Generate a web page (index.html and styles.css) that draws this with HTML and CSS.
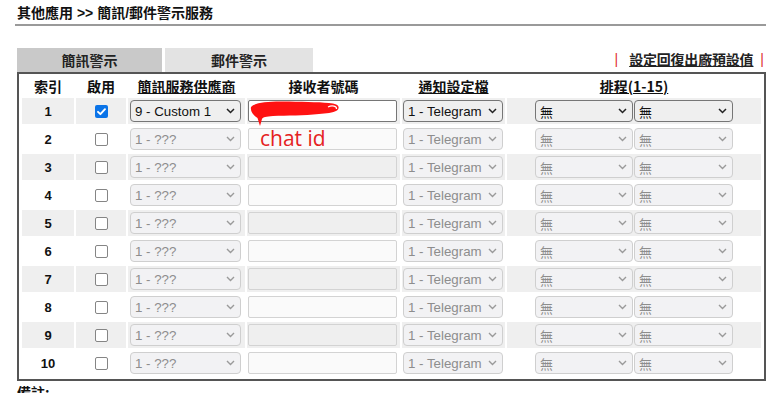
FILE: index.html
```html
<!DOCTYPE html>
<html lang="zh-Hant">
<head>
<meta charset="utf-8">
<title>簡訊/郵件警示服務</title>
<link rel="stylesheet" href="styles.css">
</head>
<body>
<div class="page">
  <div class="title">其他應用 &gt;&gt; 簡訊/郵件警示服務</div>
  <div class="rule"></div>
  <div class="tabbar">
    <div class="tab tab-on">簡訊警示</div>
    <div class="tab tab-off">郵件警示</div>
    <div class="reset"><span class="bar">|</span><a class="reset-link">設定回復出廠預設值</a><span class="bar">|</span></div>
  </div>
  <div class="box">
    <table class="grid">
      <colgroup>
        <col class="c-idx"><col class="c-en"><col class="c-prov"><col class="c-rcv"><col class="c-prof"><col class="c-sch">
      </colgroup>
      <thead>
        <tr>
          <th>索引</th>
          <th>啟用</th>
          <th><span class="ul">簡訊服務供應商</span></th>
          <th>接收者號碼</th>
          <th><span class="ul">通知設定檔</span></th>
          <th><span class="ul">排程(1-15)</span></th>
        </tr>
      </thead>
      <tbody>
        <tr class="alt">
          <td class="num">1</td>
          <td class="chk"><span class="cb on"><svg viewBox="0 0 13 13" width="13" height="13"><path d="M3 6.8 L5.4 9.2 L10 4.2" fill="none" stroke="#fff" stroke-width="1.9" stroke-linecap="round" stroke-linejoin="round"/></svg></span></td>
          <td class="prov"><div class="sel w-prov"><span>9 - Custom 1</span><svg class="chev" viewBox="0 0 9 6" width="9" height="6"><path d="M1 1 L4.5 4.5 L8 1" fill="none" stroke="#222" stroke-width="1.5"/></svg></div></td>
          <td class="rcv"><div class="inp"><svg class="scribble" viewBox="0 0 92 28" width="92" height="28"><path d="M2 7 C6 2 20 1 40 1.5 C58 2 74 2 84 3.5 C90 4.5 91 8 88 10.5 C84 13 77 13.5 70 14 C55 15.5 38 15.5 24 16 C17 16.5 14 17 13 19 L11 26 L8.5 18 C5 16 1 12 2 7 Z" fill="#ff1212"/><path d="M79 7 C83 5 88 6 87.5 9" fill="none" stroke="#fff" stroke-width="1.2"/></svg></div></td>
          <td class="prof"><div class="sel w-prof"><span>1 - Telegram</span><svg class="chev" viewBox="0 0 9 6" width="9" height="6"><path d="M1 1 L4.5 4.5 L8 1" fill="none" stroke="#222" stroke-width="1.5"/></svg></div></td>
          <td class="sch"><div class="pair"><div class="sel w-s1 cjk"><span>無</span><svg class="chev" viewBox="0 0 9 6" width="9" height="6"><path d="M1 1 L4.5 4.5 L8 1" fill="none" stroke="#222" stroke-width="1.5"/></svg></div><div class="sel w-s2 cjk"><span>無</span><svg class="chev" viewBox="0 0 9 6" width="9" height="6"><path d="M1 1 L4.5 4.5 L8 1" fill="none" stroke="#222" stroke-width="1.5"/></svg></div></div></td>
        </tr>
        <tr>
          <td class="num">2</td>
          <td class="chk"><span class="cb"></span></td>
          <td class="prov"><div class="sel dis w-prov"><span>1 - ???</span><svg class="chev" viewBox="0 0 9 6" width="9" height="6"><path d="M1 1 L4.5 4.5 L8 1" fill="none" stroke="#9a9a9a" stroke-width="1.4"/></svg></div></td>
          <td class="rcv"><div class="inp dis"><span class="chat">chat id</span></div></td>
          <td class="prof"><div class="sel dis w-prof"><span>1 - Telegram</span><svg class="chev" viewBox="0 0 9 6" width="9" height="6"><path d="M1 1 L4.5 4.5 L8 1" fill="none" stroke="#9a9a9a" stroke-width="1.4"/></svg></div></td>
          <td class="sch"><div class="pair"><div class="sel dis w-s1 cjk"><span>無</span><svg class="chev" viewBox="0 0 9 6" width="9" height="6"><path d="M1 1 L4.5 4.5 L8 1" fill="none" stroke="#9a9a9a" stroke-width="1.4"/></svg></div><div class="sel dis w-s2 cjk"><span>無</span><svg class="chev" viewBox="0 0 9 6" width="9" height="6"><path d="M1 1 L4.5 4.5 L8 1" fill="none" stroke="#9a9a9a" stroke-width="1.4"/></svg></div></div></td>
        </tr>
        <tr class="alt">
          <td class="num">3</td>
          <td class="chk"><span class="cb"></span></td>
          <td class="prov"><div class="sel dis w-prov"><span>1 - ???</span><svg class="chev" viewBox="0 0 9 6" width="9" height="6"><path d="M1 1 L4.5 4.5 L8 1" fill="none" stroke="#9a9a9a" stroke-width="1.4"/></svg></div></td>
          <td class="rcv"><div class="inp dis"></div></td>
          <td class="prof"><div class="sel dis w-prof"><span>1 - Telegram</span><svg class="chev" viewBox="0 0 9 6" width="9" height="6"><path d="M1 1 L4.5 4.5 L8 1" fill="none" stroke="#9a9a9a" stroke-width="1.4"/></svg></div></td>
          <td class="sch"><div class="pair"><div class="sel dis w-s1 cjk"><span>無</span><svg class="chev" viewBox="0 0 9 6" width="9" height="6"><path d="M1 1 L4.5 4.5 L8 1" fill="none" stroke="#9a9a9a" stroke-width="1.4"/></svg></div><div class="sel dis w-s2 cjk"><span>無</span><svg class="chev" viewBox="0 0 9 6" width="9" height="6"><path d="M1 1 L4.5 4.5 L8 1" fill="none" stroke="#9a9a9a" stroke-width="1.4"/></svg></div></div></td>
        </tr>
        <tr>
          <td class="num">4</td>
          <td class="chk"><span class="cb"></span></td>
          <td class="prov"><div class="sel dis w-prov"><span>1 - ???</span><svg class="chev" viewBox="0 0 9 6" width="9" height="6"><path d="M1 1 L4.5 4.5 L8 1" fill="none" stroke="#9a9a9a" stroke-width="1.4"/></svg></div></td>
          <td class="rcv"><div class="inp dis"></div></td>
          <td class="prof"><div class="sel dis w-prof"><span>1 - Telegram</span><svg class="chev" viewBox="0 0 9 6" width="9" height="6"><path d="M1 1 L4.5 4.5 L8 1" fill="none" stroke="#9a9a9a" stroke-width="1.4"/></svg></div></td>
          <td class="sch"><div class="pair"><div class="sel dis w-s1 cjk"><span>無</span><svg class="chev" viewBox="0 0 9 6" width="9" height="6"><path d="M1 1 L4.5 4.5 L8 1" fill="none" stroke="#9a9a9a" stroke-width="1.4"/></svg></div><div class="sel dis w-s2 cjk"><span>無</span><svg class="chev" viewBox="0 0 9 6" width="9" height="6"><path d="M1 1 L4.5 4.5 L8 1" fill="none" stroke="#9a9a9a" stroke-width="1.4"/></svg></div></div></td>
        </tr>
        <tr class="alt">
          <td class="num">5</td>
          <td class="chk"><span class="cb"></span></td>
          <td class="prov"><div class="sel dis w-prov"><span>1 - ???</span><svg class="chev" viewBox="0 0 9 6" width="9" height="6"><path d="M1 1 L4.5 4.5 L8 1" fill="none" stroke="#9a9a9a" stroke-width="1.4"/></svg></div></td>
          <td class="rcv"><div class="inp dis"></div></td>
          <td class="prof"><div class="sel dis w-prof"><span>1 - Telegram</span><svg class="chev" viewBox="0 0 9 6" width="9" height="6"><path d="M1 1 L4.5 4.5 L8 1" fill="none" stroke="#9a9a9a" stroke-width="1.4"/></svg></div></td>
          <td class="sch"><div class="pair"><div class="sel dis w-s1 cjk"><span>無</span><svg class="chev" viewBox="0 0 9 6" width="9" height="6"><path d="M1 1 L4.5 4.5 L8 1" fill="none" stroke="#9a9a9a" stroke-width="1.4"/></svg></div><div class="sel dis w-s2 cjk"><span>無</span><svg class="chev" viewBox="0 0 9 6" width="9" height="6"><path d="M1 1 L4.5 4.5 L8 1" fill="none" stroke="#9a9a9a" stroke-width="1.4"/></svg></div></div></td>
        </tr>
        <tr>
          <td class="num">6</td>
          <td class="chk"><span class="cb"></span></td>
          <td class="prov"><div class="sel dis w-prov"><span>1 - ???</span><svg class="chev" viewBox="0 0 9 6" width="9" height="6"><path d="M1 1 L4.5 4.5 L8 1" fill="none" stroke="#9a9a9a" stroke-width="1.4"/></svg></div></td>
          <td class="rcv"><div class="inp dis"></div></td>
          <td class="prof"><div class="sel dis w-prof"><span>1 - Telegram</span><svg class="chev" viewBox="0 0 9 6" width="9" height="6"><path d="M1 1 L4.5 4.5 L8 1" fill="none" stroke="#9a9a9a" stroke-width="1.4"/></svg></div></td>
          <td class="sch"><div class="pair"><div class="sel dis w-s1 cjk"><span>無</span><svg class="chev" viewBox="0 0 9 6" width="9" height="6"><path d="M1 1 L4.5 4.5 L8 1" fill="none" stroke="#9a9a9a" stroke-width="1.4"/></svg></div><div class="sel dis w-s2 cjk"><span>無</span><svg class="chev" viewBox="0 0 9 6" width="9" height="6"><path d="M1 1 L4.5 4.5 L8 1" fill="none" stroke="#9a9a9a" stroke-width="1.4"/></svg></div></div></td>
        </tr>
        <tr class="alt">
          <td class="num">7</td>
          <td class="chk"><span class="cb"></span></td>
          <td class="prov"><div class="sel dis w-prov"><span>1 - ???</span><svg class="chev" viewBox="0 0 9 6" width="9" height="6"><path d="M1 1 L4.5 4.5 L8 1" fill="none" stroke="#9a9a9a" stroke-width="1.4"/></svg></div></td>
          <td class="rcv"><div class="inp dis"></div></td>
          <td class="prof"><div class="sel dis w-prof"><span>1 - Telegram</span><svg class="chev" viewBox="0 0 9 6" width="9" height="6"><path d="M1 1 L4.5 4.5 L8 1" fill="none" stroke="#9a9a9a" stroke-width="1.4"/></svg></div></td>
          <td class="sch"><div class="pair"><div class="sel dis w-s1 cjk"><span>無</span><svg class="chev" viewBox="0 0 9 6" width="9" height="6"><path d="M1 1 L4.5 4.5 L8 1" fill="none" stroke="#9a9a9a" stroke-width="1.4"/></svg></div><div class="sel dis w-s2 cjk"><span>無</span><svg class="chev" viewBox="0 0 9 6" width="9" height="6"><path d="M1 1 L4.5 4.5 L8 1" fill="none" stroke="#9a9a9a" stroke-width="1.4"/></svg></div></div></td>
        </tr>
        <tr>
          <td class="num">8</td>
          <td class="chk"><span class="cb"></span></td>
          <td class="prov"><div class="sel dis w-prov"><span>1 - ???</span><svg class="chev" viewBox="0 0 9 6" width="9" height="6"><path d="M1 1 L4.5 4.5 L8 1" fill="none" stroke="#9a9a9a" stroke-width="1.4"/></svg></div></td>
          <td class="rcv"><div class="inp dis"></div></td>
          <td class="prof"><div class="sel dis w-prof"><span>1 - Telegram</span><svg class="chev" viewBox="0 0 9 6" width="9" height="6"><path d="M1 1 L4.5 4.5 L8 1" fill="none" stroke="#9a9a9a" stroke-width="1.4"/></svg></div></td>
          <td class="sch"><div class="pair"><div class="sel dis w-s1 cjk"><span>無</span><svg class="chev" viewBox="0 0 9 6" width="9" height="6"><path d="M1 1 L4.5 4.5 L8 1" fill="none" stroke="#9a9a9a" stroke-width="1.4"/></svg></div><div class="sel dis w-s2 cjk"><span>無</span><svg class="chev" viewBox="0 0 9 6" width="9" height="6"><path d="M1 1 L4.5 4.5 L8 1" fill="none" stroke="#9a9a9a" stroke-width="1.4"/></svg></div></div></td>
        </tr>
        <tr class="alt">
          <td class="num">9</td>
          <td class="chk"><span class="cb"></span></td>
          <td class="prov"><div class="sel dis w-prov"><span>1 - ???</span><svg class="chev" viewBox="0 0 9 6" width="9" height="6"><path d="M1 1 L4.5 4.5 L8 1" fill="none" stroke="#9a9a9a" stroke-width="1.4"/></svg></div></td>
          <td class="rcv"><div class="inp dis"></div></td>
          <td class="prof"><div class="sel dis w-prof"><span>1 - Telegram</span><svg class="chev" viewBox="0 0 9 6" width="9" height="6"><path d="M1 1 L4.5 4.5 L8 1" fill="none" stroke="#9a9a9a" stroke-width="1.4"/></svg></div></td>
          <td class="sch"><div class="pair"><div class="sel dis w-s1 cjk"><span>無</span><svg class="chev" viewBox="0 0 9 6" width="9" height="6"><path d="M1 1 L4.5 4.5 L8 1" fill="none" stroke="#9a9a9a" stroke-width="1.4"/></svg></div><div class="sel dis w-s2 cjk"><span>無</span><svg class="chev" viewBox="0 0 9 6" width="9" height="6"><path d="M1 1 L4.5 4.5 L8 1" fill="none" stroke="#9a9a9a" stroke-width="1.4"/></svg></div></div></td>
        </tr>
        <tr>
          <td class="num">10</td>
          <td class="chk"><span class="cb"></span></td>
          <td class="prov"><div class="sel dis w-prov"><span>1 - ???</span><svg class="chev" viewBox="0 0 9 6" width="9" height="6"><path d="M1 1 L4.5 4.5 L8 1" fill="none" stroke="#9a9a9a" stroke-width="1.4"/></svg></div></td>
          <td class="rcv"><div class="inp dis"></div></td>
          <td class="prof"><div class="sel dis w-prof"><span>1 - Telegram</span><svg class="chev" viewBox="0 0 9 6" width="9" height="6"><path d="M1 1 L4.5 4.5 L8 1" fill="none" stroke="#9a9a9a" stroke-width="1.4"/></svg></div></td>
          <td class="sch"><div class="pair"><div class="sel dis w-s1 cjk"><span>無</span><svg class="chev" viewBox="0 0 9 6" width="9" height="6"><path d="M1 1 L4.5 4.5 L8 1" fill="none" stroke="#9a9a9a" stroke-width="1.4"/></svg></div><div class="sel dis w-s2 cjk"><span>無</span><svg class="chev" viewBox="0 0 9 6" width="9" height="6"><path d="M1 1 L4.5 4.5 L8 1" fill="none" stroke="#9a9a9a" stroke-width="1.4"/></svg></div></div></td>
        </tr>
      </tbody>
    </table>
  </div>
  <div class="note">備註:</div>
</div>
</body>
</html>
```
FILE: styles.css
```css
html, body {
  margin: 0;
  padding: 0;
  background: #fff;
}
body {
  font-family: "Liberation Sans", "Noto Sans CJK TC", sans-serif;
  color: #000;
  overflow: hidden;
}
.page {
  width: 749px;
  padding-left: 17px;
}
.title {
  height: 24px;
  box-sizing: border-box;
  padding-top: 5px;
  line-height: 16px;
  font-size: 14px;
  font-weight: bold;
  font-family: "Liberation Sans", "Noto Sans CJK TC", sans-serif;
  color: #111;
}
.rule {
  margin-left: -2px;
  width: 751px;
  height: 2px;
  background: #9a9a9a;
}
.tabbar {
  margin-top: 22px;
  height: 24px;
  display: flex;
  align-items: stretch;
}
.tab {
  line-height: 24px;
  text-align: center;
  font-size: 14px;
  font-weight: bold;
  font-family: "Noto Sans CJK TC", sans-serif;
  color: #222;
}
.tab-on {
  width: 145px;
  background: #c9c9c9;
}
.tab-off {
  width: 148px;
  margin-left: 3px;
  background: #e3e3e3;
}
.reset {
  margin-left: auto;
  margin-right: 2px;
  display: flex;
  align-items: center;
  height: 22px;
  font-size: 14px;
  font-family: "Noto Sans CJK TC", sans-serif;
}
.bar {
  color: #e03030;
  font-family: "Liberation Sans", sans-serif;
  font-size: 14px;
}
.reset-link {
  margin: 0 7px 0 11px;
  font-weight: bold;
  color: #222;
  text-decoration: underline;
  letter-spacing: -0.2px;
}
.box {
  border: 2px solid #555;
  padding: 1px;
}
.grid {
  width: 743px;
  table-layout: fixed;
  border-collapse: separate;
  border-spacing: 2px;
}
.c-idx { width: 52px; }
.c-en { width: 50px; }
.c-prov { width: 117px; }
.c-rcv { width: 153px; }
.c-prof { width: 103px; }
.c-sch { width: 254px; }
.grid th {
  height: 19px;
  padding: 0;
  font-size: 14px;
  line-height: 19px;
  font-weight: bold;
  font-family: "Noto Sans CJK TC", sans-serif;
  color: #111;
  text-align: center;
}
.ul {
  text-decoration: underline;
}
.grid td {
  height: 26px;
  padding: 0;
  vertical-align: middle;
}
.grid tr.alt td {
  background: #efefef;
}
.num {
  text-align: center;
  font-weight: bold;
  font-size: 13px;
  color: #111;
}
.chk {
  text-align: center;
}
.cb {
  display: inline-block;
  width: 13px;
  height: 13px;
  box-sizing: border-box;
  border: 1px solid #858585;
  border-radius: 2px;
  background: #fff;
  vertical-align: middle;
}
.cb.on {
  border: none;
  background: #0b74e8;
}
.cb svg {
  display: block;
}
.prov {
  padding-left: 2px !important;
}
.rcv {
  padding-left: 1px !important;
}
.prof {
  padding-left: 1px !important;
}
.sel {
  display: flex;
  align-items: center;
  justify-content: space-between;
  height: 22px;
  box-sizing: border-box;
  border: 1px solid #767676;
  border-radius: 4px;
  background: #efefef;
  padding: 0 5px 0 4px;
  font-size: 13.3px;
  font-family: "Liberation Sans", sans-serif;
  color: #111;
}
.sel.cjk {
  font-family: "Noto Sans CJK TC", sans-serif;
  font-size: 13px;
}
.sel.dis {
  border-color: #cfcfcf;
  background: #f2f2f4;
  color: #8d8d8d;
}
.chev {
  display: block;
  flex: none;
}
.w-prov { width: 111px; }
.w-prof { width: 100px; }
.w-s1 { width: 98px; }
.w-s2 { width: 99px; margin-left: 1px; }
.pair {
  display: flex;
  justify-content: center;
}
.inp {
  position: relative;
  width: 149px;
  height: 22px;
  box-sizing: border-box;
  border: 1px solid #767676;
  border-radius: 2px;
  background: #fff;
}
.inp.dis {
  border-color: #d3d3d3;
  background: rgba(239, 239, 239, 0.3);
}
.scribble {
  position: absolute;
  left: 0;
  top: -1px;
}
.chat {
  position: absolute;
  left: 11px;
  top: -5px;
  font-family: "Open Sans", sans-serif;
  font-size: 21px;
  line-height: 28px;
  color: #e52222;
  white-space: nowrap;
}
.note {
  margin-top: 2px;
  font-size: 14px;
  font-weight: bold;
  line-height: 18px;
  font-family: "Noto Sans CJK TC", sans-serif;
  color: #111;
}
```
